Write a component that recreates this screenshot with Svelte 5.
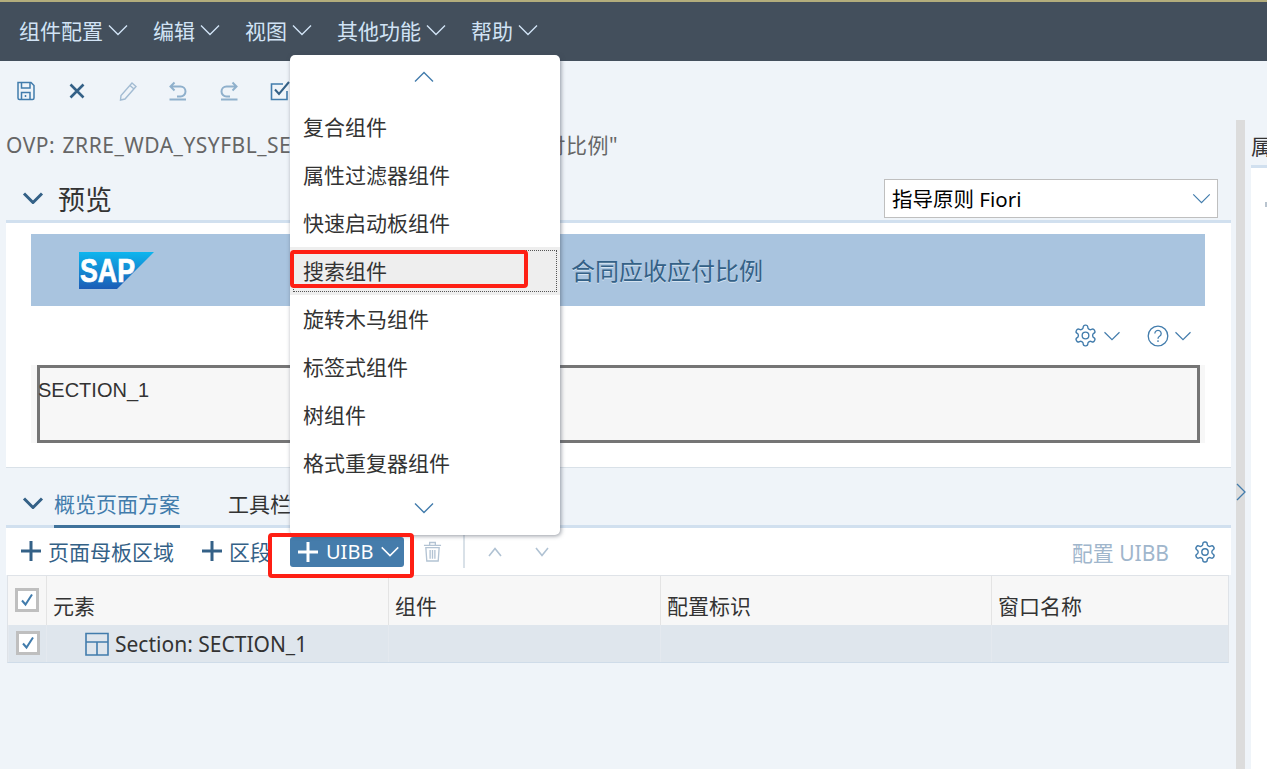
<script>
    const topMenu = ["组件配置", "编辑", "视图", "其他功能", "帮助"];
    const uibbItems = ["复合组件", "属性过滤器组件", "快速启动板组件", "搜索组件", "旋转木马组件", "标签式组件", "树组件", "格式重复器组件"];
    const columns = ["元素", "组件", "配置标识", "窗口名称"];
    const gearPath = "M12.22 2h-.44a2 2 0 0 0-2 2v.18a2 2 0 0 1-1 1.73l-.43.25a2 2 0 0 1-2 0l-.15-.08a2 2 0 0 0-2.73.73l-.22.38a2 2 0 0 0 .73 2.73l.15.1a2 2 0 0 1 1 1.72v.51a2 2 0 0 1-1 1.74l-.15.09a2 2 0 0 0-.73 2.73l.22.38a2 2 0 0 0 2.73.73l.15-.08a2 2 0 0 1 2 0l.43.25a2 2 0 0 1 1 1.73V20a2 2 0 0 0 2 2h.44a2 2 0 0 0 2-2v-.18a2 2 0 0 1 1-1.73l.43-.25a2 2 0 0 1 2 0l.15.08a2 2 0 0 0 2.73-.73l.22-.39a2 2 0 0 0-.73-2.73l-.15-.08a2 2 0 0 1-1-1.74v-.5a2 2 0 0 1 1-1.74l.15-.09a2 2 0 0 0 .73-2.73l-.22-.38a2 2 0 0 0-2.73-.73l-.15.08a2 2 0 0 1-2 0l-.43-.25a2 2 0 0 1-1-1.73V4a2 2 0 0 0-2-2z";
</script>

{#snippet chevron(cls)}
    <svg class={cls} viewBox="0 0 20 12" fill="none" stroke="currentColor"><path d="M1 1.5 10 10.5 19 1.5" /></svg>
{/snippet}

{#snippet gear(cls)}
    <svg class={cls} viewBox="0 0 24 24" fill="none" stroke="currentColor" stroke-width="1.6"><path d={gearPath} /><circle cx="12" cy="12" r="3.2" /></svg>
{/snippet}

{#snippet plus()}
    <svg class="plus" viewBox="0 0 20 20" fill="none" stroke="currentColor" stroke-width="3"><path d="M10 0V20M0 10H20" /></svg>
{/snippet}

{#snippet checkbox()}
    <span class="check">
        <svg viewBox="0 0 14 14" fill="none" stroke="#427cac" stroke-width="2"><path d="M2 7.5 5.5 11.5 12 1.5" /></svg>
    </span>
{/snippet}

<div class="page">
    <header class="topbar">
        {#each topMenu as item}
            <span class="top-item">{item}{@render chevron("top-chev")}</span>
        {/each}
    </header>

    <div class="toolbar">
        <svg class="tool" viewBox="0 0 20 20" fill="none" stroke="#427cac" stroke-width="1.5"><path d="M2 1.5H15L18 4.5V17a1.5 1.5 0 0 1-1.5 1.5H3.5A1.5 1.5 0 0 1 2 17Z" /><path d="M5.5 1.5V7H14V1.5M5.5 18.5V11.5H14V18.5M9.5 14V16" /></svg>
        <svg class="tool" viewBox="0 0 20 20" fill="none" stroke="#346187" stroke-width="2.6"><path d="M3.5 3.5 16.5 16.5M16.5 3.5 3.5 16.5" /></svg>
        <svg class="tool" viewBox="0 0 20 20" fill="none" stroke="#a3bcd3" stroke-width="1.4"><path d="M14 2 18 5.5 7 18 2.5 19 3 14.5ZM12 4.5 16 8" /></svg>
        <svg class="tool" viewBox="0 0 20 20" fill="none" stroke="#8fb0cc" stroke-width="2"><path d="M6.5 1.5 2.5 5.5 6.5 9.5M3 5.5H12.5a5 5 0 0 1 5 5v0a5 5 0 0 1-5 5H9M1.5 18.5H18" /></svg>
        <svg class="tool" viewBox="0 0 20 20" fill="none" stroke="#8fb0cc" stroke-width="2"><path d="M13.5 1.5 17.5 5.5 13.5 9.5M17 5.5H7.5a5 5 0 0 0-5 5v0a5 5 0 0 0 5 5H11M2 18.5H18.5" /></svg>
        <svg class="tool" viewBox="0 0 20 20" fill="none" stroke="#427cac" stroke-width="1.6"><path d="M17 10V18.5H1.5V3H13" /><path d="M5 8.5 9 13 19 1" stroke="#346187" stroke-width="2" /></svg>
    </div>

    <div class="workspace">
        <main class="content">
            <p class="title">OVP: ZRRE_WDA_YSYFBL_SEARCH 的配置 "合同应收应付比例"</p>

            <div class="preview-head">
                {@render chevron("section-chev")}
                <h2>预览</h2>
                <div class="select">
                    <span>指导原则 Fiori</span>
                    {@render chevron("select-chev")}
                </div>
            </div>

            <section class="preview">
                <div class="banner">
                    <svg class="sap" viewBox="0 0 75 37">
                        <defs>
                            <linearGradient id="sapfill" x1="0" y1="0" x2="0" y2="1">
                                <stop offset="0" stop-color="#0db6ee" />
                                <stop offset="1" stop-color="#1c5cb6" />
                            </linearGradient>
                        </defs>
                        <polygon points="0,0 75,0 38,37 0,37" fill="url(#sapfill)" />
                        <text x="1" y="30" textLength="55" lengthAdjust="spacingAndGlyphs">SAP</text>
                    </svg>
                    <span class="banner-title">合同应收应付比例</span>
                </div>
                <div class="preview-tools">
                    {@render gear("small-gear")}
                    {@render chevron("blue-chev")}
                    <svg class="help" viewBox="0 0 22 22" fill="none" stroke="currentColor" stroke-width="1.3">
                        <circle cx="11" cy="11" r="9.8" />
                        <path d="M7.8 8.5a3.2 3.2 0 1 1 4.8 2.8c-1 .6-1.6 1.2-1.6 2.4M11 15.3V17" />
                    </svg>
                    {@render chevron("blue-chev")}
                </div>
                <div class="section-wrap">
                    <div class="section-box">SECTION_1</div>
                </div>
            </section>

            <div class="tabs">
                {@render chevron("tab-chev")}
                <span class="tab active">概览页面方案</span>
                <span class="tab">工具栏</span>
            </div>

            <section class="schema">
                <div class="schema-tools">
                    <span class="link first">{@render plus()}页面母板区域</span>
                    <span class="link second">{@render plus()}区段</span>
                    <span class="uibb">{@render plus()}UIBB{@render chevron("uibb-chev")}</span>
                    <svg class="trash" viewBox="0 0 20 22" fill="none" stroke="#b3c3d3" stroke-width="1.4"><path d="M1 4.5H19M7 4.5V1.5H13V4.5M3 7H17L16 21H4ZM7.5 9.5V18.5M10 9.5V18.5M12.5 9.5V18.5" /></svg>
                    <span class="sep"></span>
                    <svg class="mini up" viewBox="0 0 14 10" fill="none" stroke="#b0c2d3" stroke-width="1.6"><path d="M1 9 7 1.5 13 9" /></svg>
                    <svg class="mini down" viewBox="0 0 14 10" fill="none" stroke="#b0c2d3" stroke-width="1.6"><path d="M1 1 7 8.5 13 1" /></svg>
                    <span class="config">配置 UIBB</span>
                    {@render gear("table-gear")}
                </div>
                <div class="table">
                    <div class="row head">
                        <div class="cell box">{@render checkbox()}</div>
                        {#each columns as col}
                            <div class="cell">{col}</div>
                        {/each}
                    </div>
                    <div class="row body">
                        <div class="cell box">{@render checkbox()}</div>
                        <div class="cell name">
                            <svg class="layout" viewBox="0 0 24 24" fill="none" stroke="#427cac" stroke-width="1.6"><path d="M1 1.5H23V23H1ZM1 10H23M12 10V23" /></svg>
                            Section: SECTION_1
                        </div>
                        <div class="cell"></div>
                        <div class="cell"></div>
                        <div class="cell"></div>
                    </div>
                </div>
            </section>
        </main>

        <div class="splitter">
            <svg viewBox="0 0 10 18" fill="none" stroke="#427cac" stroke-width="1.3"><path d="M1 1 9 9 1 17" /></svg>
        </div>

        <aside class="side">
            <div class="side-tab">属性</div>
            <div class="side-body"><i></i></div>
        </aside>
    </div>

    <!-- Aufklappmenue liegt ueber dem Inhalt -->
    <div class="menu">
        <svg class="menu-arrow" viewBox="0 0 20 12" fill="none" stroke="#427cac" stroke-width="1.4"><path d="M1 10.5 10 1.5 19 10.5" /></svg>
        <ul>
            {#each uibbItems as item}
                <li class:hot={item === "搜索组件"}>{item}</li>
            {/each}
        </ul>
        <svg class="menu-arrow" viewBox="0 0 20 12" fill="none" stroke="#427cac" stroke-width="1.4"><path d="M1 1.5 10 10.5 19 1.5" /></svg>
    </div>

    <div class="mark mark-item"></div>
    <div class="mark mark-button"></div>
</div>

<style>
    :global(body) {
        margin: 0;
        background: #eff4f9;
    }

    .page {
        position: relative;
        width: 1267px;
        height: 769px;
        overflow: hidden;
        background: #eff4f9;
        font-family: "Noto Sans", "Noto Sans CJK SC", sans-serif;
        font-size: 21px;
        color: #333;
    }

    .topbar {
        box-sizing: border-box;
        height: 61px;
        padding: 0 0 4px 19px;
        display: flex;
        align-items: center;
        gap: 25px;
        background: #434f5c;
        border-top: 2px solid #b3ad7c;
        color: #d1e3f5;
    }

    .top-item {
        display: flex;
        align-items: center;
        gap: 5px;
        white-space: nowrap;
    }

    .top-chev {
        width: 20px;
        height: 12px;
        stroke-width: 1.4;
    }

    .toolbar {
        height: 59px;
        padding-left: 16px;
        display: flex;
        align-items: center;
        gap: 30.8px;
        box-sizing: border-box;
    }

    .tool {
        width: 20px;
        height: 20px;
        flex: none;
    }

    .workspace {
        display: flex;
        height: 649px;
    }

    .content {
        width: 1225px;
        margin-left: 6px;
        flex: none;
    }

    .title {
        margin: 11px 0 0;
        height: 29px;
        line-height: 29px;
        letter-spacing: 0.5px;
        word-spacing: 1.5px;
        color: #666;
        white-space: nowrap;
    }

    .preview-head {
        display: flex;
        align-items: center;
        height: 40px;
        margin-top: 18px;
    }

    .section-chev {
        width: 22px;
        height: 12px;
        margin-left: 16px;
        stroke-width: 3;
        color: #346187;
    }

    h2 {
        margin: 0 0 0 14px;
        font-size: 27px;
        font-weight: 400;
    }

    .select {
        margin-left: auto;
        margin-right: 13px;
        box-sizing: border-box;
        width: 334px;
        height: 39px;
        padding: 0 6px 0 7px;
        display: flex;
        align-items: center;
        justify-content: space-between;
        background: #fff;
        border: 1px solid #bfbfbf;
        color: #000;
        font-size: 20.5px;
    }

    .select-chev {
        width: 19px;
        height: 11px;
        stroke-width: 1.3;
        color: #427cac;
    }

    .preview {
        box-sizing: border-box;
        height: 248px;
        padding: 11px 26px 0 25px;
        margin-top: 2px;
        background: #fff;
        border-top: 3px solid #d1e0ef;
        border-bottom: 1px solid #d9e1e8;
    }

    .banner {
        height: 72px;
        display: flex;
        align-items: center;
        background: #a9c4df;
    }

    .sap {
        width: 75px;
        height: 37px;
        margin-left: 48px;
        flex: none;
    }

    .sap text {
        font-family: "Liberation Sans", sans-serif;
        font-size: 33px;
        font-weight: 700;
        fill: #fff;
        stroke: #fff;
        stroke-width: 0.7;
    }

    .banner-title {
        margin-left: 417px;
        padding-bottom: 2px;
        font-size: 24px;
        color: #346187;
        text-shadow: 0 1px 0 #d5e3f0;
    }

    .preview-tools {
        height: 59px;
        display: flex;
        align-items: center;
        justify-content: flex-end;
        padding-right: 13px;
        color: #427cac;
    }

    .small-gear {
        width: 25px;
        height: 25px;
        stroke-width: 1.3;
    }

    .blue-chev {
        width: 18px;
        height: 10px;
        margin-left: 5px;
        stroke-width: 1.4;
    }

    .help {
        width: 22px;
        height: 22px;
        margin-left: 26px;
    }

    .section-wrap {
        height: 78px;
        padding: 0 5px 0 6px;
        background: #f7f7f7;
    }

    .section-box {
        box-sizing: border-box;
        height: 78px;
        border: 3px solid #757575;
        background: #f7f7f7;
        font-family: "Liberation Sans", sans-serif;
        font-size: 20px;
        line-height: 44px;
        text-indent: -2px;
        color: #333;
    }

    .tabs {
        display: flex;
        align-items: flex-end;
        height: 60px;
    }

    .tab-chev {
        width: 22px;
        height: 12px;
        margin: 0 10px 19px 16px;
        stroke-width: 3;
        color: #346187;
    }

    .tab {
        height: 37px;
        line-height: 26px;
        margin-right: 48px;
        box-sizing: border-box;
    }

    .tab.active {
        color: #427cac;
        border-bottom: 3px solid #3f729b;
        position: relative;
        z-index: 1;
    }

    .schema-tools {
        box-sizing: border-box;
        height: 50px;
        margin-top: -3px;
        display: flex;
        align-items: center;
        background: #fff;
        border-top: 3px solid #d1e0ef;
        color: #346187;
    }

    .link {
        display: flex;
        align-items: center;
        gap: 7px;
        margin-bottom: 2px;
        color: #346187;
        white-space: nowrap;
    }

    .link.first {
        margin-left: 15px;
    }

    .link.second {
        margin-left: 28px;
    }

    .plus {
        width: 20px;
        height: 20px;
        flex: none;
    }

    .uibb {
        box-sizing: border-box;
        width: 114px;
        height: 30px;
        margin-left: 19px;
        padding-left: 8px;
        display: flex;
        align-items: center;
        gap: 8px;
        border-radius: 3px;
        background: #457cab;
        color: #fff;
        font-size: 20px;
    }

    .uibb-chev {
        width: 20px;
        height: 11px;
        margin-left: -1px;
        stroke-width: 1.6;
    }

    .trash {
        width: 19px;
        height: 21px;
        margin-left: 19px;
        flex: none;
    }

    .sep {
        width: 2px;
        height: 33px;
        margin-left: 21px;
        background: #d9e1e8;
    }

    .mini {
        width: 14px;
        height: 10px;
        flex: none;
    }

    .mini.up {
        margin-left: 23px;
    }

    .mini.down {
        margin-left: 33px;
    }

    .config {
        margin-left: auto;
        color: #a0b6cc;
        white-space: nowrap;
    }

    .table-gear {
        width: 24px;
        height: 24px;
        margin: 0 14px 0 24px;
        stroke-width: 1.4;
        color: #427cac;
    }

    .table {
        width: 1222px;
        margin-left: 1px;
        border: 1px solid #dfe3e8;
        border-bottom-color: #cfdce9;
        box-sizing: border-box;
    }

    .row {
        display: grid;
        grid-template-columns: 38px 342px 272px 331px 1fr;
    }

    .row.head {
        height: 49px;
        background: #f7f7f7;
    }

    .row.head .cell {
        align-items: flex-end;
        padding: 0 0 5px 6px;
        border-left: 1px solid #e4e4e4;
    }

    .row.body {
        height: 37px;
        background: #dfe6ed;
    }

    .cell {
        display: flex;
        align-items: center;
        box-sizing: border-box;
        min-width: 0;
    }

    .row.head .cell.box,
    .cell.box {
        align-items: center;
        justify-content: center;
        border-left: none;
        padding: 0 0 2px;
    }

    .row.body .cell {
        border-left: 1px solid #e4e9ef;
    }

    .cell.name {
        padding-left: 38px;
        gap: 6px;
    }

    .layout {
        width: 24px;
        height: 24px;
        flex: none;
    }

    .check {
        box-sizing: border-box;
        width: 24px;
        height: 24px;
        display: flex;
        align-items: center;
        justify-content: center;
        background: #fff;
        border: 3px solid #bfbfbf;
    }

    .check svg {
        width: 14px;
        height: 14px;
    }

    .splitter {
        position: relative;
        width: 9px;
        margin-left: 5px;
        flex: none;
        background: #dcdcdc;
    }

    .splitter svg {
        position: absolute;
        left: 0;
        top: 363px;
        width: 10px;
        height: 18px;
    }

    .side {
        flex: 1;
        margin-left: 6px;
        min-width: 0;
        overflow: hidden;
    }

    .side-tab {
        height: 45px;
        padding-top: 10px;
        box-sizing: border-box;
        white-space: nowrap;
    }

    .side-body {
        height: 100%;
        background: #fff;
        border-top: 3px solid #d1e0ef;
        position: relative;
    }

    .side-body i {
        position: absolute;
        left: 14px;
        top: 34px;
        width: 3px;
        height: 5px;
        background: #b9c4cf;
    }

    .menu {
        position: absolute;
        left: 290px;
        top: 55px;
        box-sizing: border-box;
        width: 270px;
        height: 480px;
        padding-top: 16px;
        display: flex;
        flex-direction: column;
        align-items: center;
        background: #fff;
        border-radius: 5px;
        box-shadow: 1px 1px 4px rgba(60, 70, 85, 0.55);
    }

    .menu-arrow {
        width: 20px;
        height: 12px;
        margin-right: 2px;
        flex: none;
    }

    .menu ul {
        list-style: none;
        width: 100%;
        margin: 20px 0 15px;
        padding: 0;
    }

    .menu li {
        height: 48px;
        padding-left: 13px;
        line-height: 48px;
        white-space: nowrap;
        box-sizing: border-box;
    }

    .menu li.hot {
        background: #eeeeee;
        outline: 1px dotted #555;
        outline-offset: -4px;
    }

    .mark {
        position: absolute;
        box-sizing: border-box;
        border: 4px solid #fe1f14;
        border-radius: 4px;
        pointer-events: none;
    }

    .mark-item {
        left: 290px;
        top: 250px;
        width: 238px;
        height: 38px;
    }

    .mark-button {
        left: 268px;
        top: 533px;
        width: 146px;
        height: 45px;
    }
</style>
